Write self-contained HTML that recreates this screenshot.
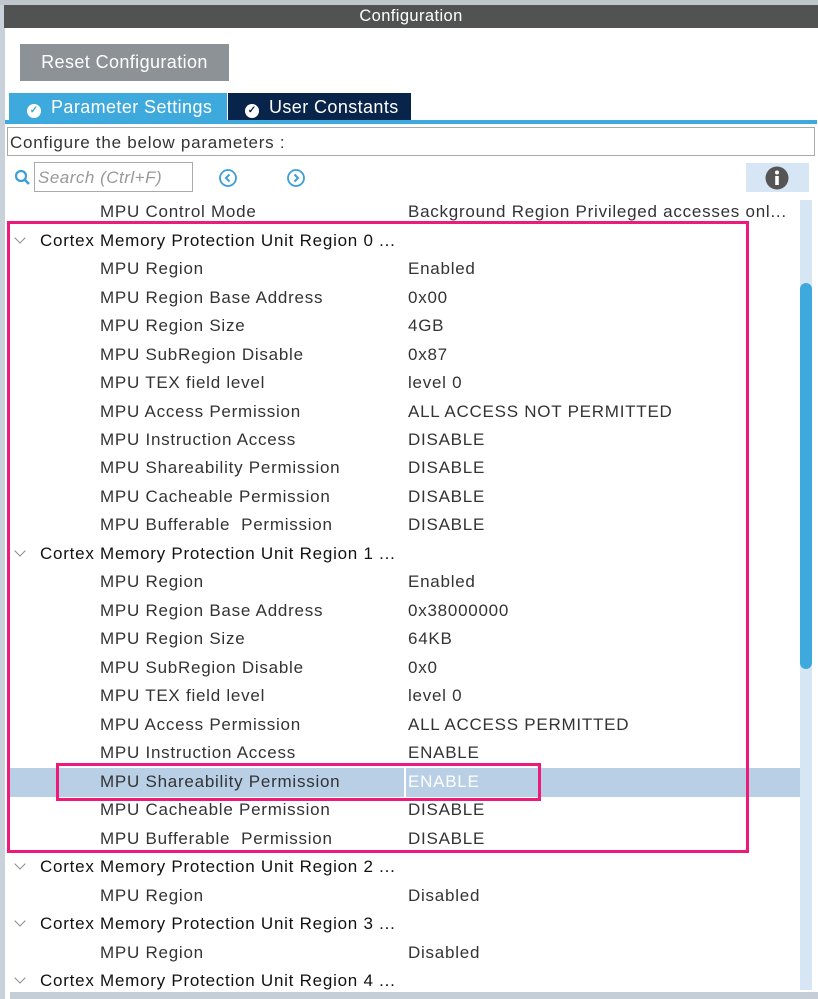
<!DOCTYPE html>
<html><head><style>
*{margin:0;padding:0;box-sizing:border-box}
body{width:818px;height:999px;overflow:hidden;background:#fff;font-family:"Liberation Sans",sans-serif;position:relative;color:#333}
.abs{position:absolute}
.row{position:absolute;left:0;height:28px;font-size:17px;line-height:28px;white-space:nowrap;letter-spacing:0.75px}
.n{position:absolute;left:100px}
.v{position:absolute;left:408px}
.h{position:absolute;left:40px;color:#111}
.chev{position:absolute;left:16px;top:7px;width:8px;height:8px;border-right:1.3px solid #888;border-bottom:1.3px solid #888;transform:rotate(45deg)}
</style></head><body>
<div class="abs" style="left:0;top:0;width:5px;height:999px;background:#c9d2da"></div>
<div class="abs" style="left:0;top:0;width:818px;height:5px;background:#bfc6cc"></div>
<div class="abs" style="left:4px;top:5px;width:814px;height:23px;background:#515352;color:#fff;font-size:16.5px;line-height:23px;text-align:center;letter-spacing:0.4px">Configuration</div>
<div class="abs" style="left:20px;top:44px;width:209px;height:37px;background:#8d9297;color:#fff;font-size:18px;line-height:37px;text-align:center;letter-spacing:0.4px">Reset Configuration</div>
<div class="abs" style="left:9px;top:93px;width:218px;height:28px;background:#3ea9dd;color:#fff;font-size:18px;line-height:28px;padding-left:18px;letter-spacing:0.4px"><span style="display:inline-block;width:14px;height:14px;border-radius:50%;background:#fff;color:#3ea9dd;font-size:10px;line-height:14px;text-align:center;vertical-align:0px;margin-right:10px;font-weight:bold;letter-spacing:0">✓</span>Parameter Settings</div>
<div class="abs" style="left:228px;top:93px;width:183px;height:28px;background:#08244a;color:#fff;font-size:18px;line-height:28px;padding-left:17px;letter-spacing:0.4px"><span style="display:inline-block;width:14px;height:14px;border-radius:50%;background:#fff;color:#08244a;font-size:10px;line-height:14px;text-align:center;vertical-align:0px;margin-right:10px;font-weight:bold;letter-spacing:0">✓</span>User Constants</div>
<div class="abs" style="left:5px;top:120px;width:812px;height:4px;background:#3ea9dd"></div>
<div class="abs" style="left:7px;top:127px;width:808px;height:29px;border:1px solid #aaa;font-size:17px;line-height:29px;padding-left:2px;letter-spacing:0.75px">Configure the below parameters :</div>
<svg class="abs" style="left:14px;top:169px" width="18" height="18"><circle cx="7" cy="7" r="5" fill="none" stroke="#3b9fd8" stroke-width="2.2"/><line x1="10.5" y1="10.5" x2="15" y2="15" stroke="#3b9fd8" stroke-width="2.5"/></svg>
<div class="abs" style="left:34px;top:162px;width:159px;height:30px;border:1px solid #aaa;font-size:17px;line-height:30px;padding-left:3px;color:#999;font-style:italic;letter-spacing:0.5px">Search (Ctrl+F)</div>
<svg class="abs" style="left:218px;top:168px" width="20" height="20"><circle cx="10" cy="10" r="8" fill="none" stroke="#3b9fd8" stroke-width="1.8"/><path d="M11.5 6.5 L8 10 L11.5 13.5" fill="none" stroke="#3b9fd8" stroke-width="2"/></svg>
<div class="abs" style="left:746px;top:163px;width:63px;height:29px;background:#d6e6f4"></div>
<svg class="abs" style="left:286px;top:168px" width="20" height="20"><circle cx="10" cy="10" r="8" fill="none" stroke="#3b9fd8" stroke-width="1.8"/><path d="M8.5 6.5 L12 10 L8.5 13.5" fill="none" stroke="#3b9fd8" stroke-width="2"/></svg>
<svg class="abs" style="left:765px;top:166px" width="24" height="24"><circle cx="12" cy="12" r="11.5" fill="#555"/><circle cx="12" cy="6.5" r="2" fill="#fff"/><rect x="10.2" y="10" width="3.6" height="9" fill="#fff"/></svg>
<div class="abs" style="left:800px;top:200px;width:12px;height:790px;background:#d6e6f4"></div>
<div class="abs" style="left:800px;top:283px;width:12px;height:386px;background:#3ea9dd;border-radius:6px"></div>
<div class="abs" style="left:10px;top:992px;width:808px;height:7px;background:#c5ced6"></div>
<div class="abs" style="left:10px;top:768px;width:790px;height:29px;background:#b8cfe6"></div>
<div class="abs" style="left:404px;top:768px;width:2px;height:29px;background:#fff"></div>

<div class="row" style="top:198px"><span class="n">MPU Control Mode</span><span class="v">Background Region Privileged accesses onl...</span></div>
<div class="row" style="top:227px"><i class="chev"></i><span class="h">Cortex Memory Protection Unit Region 0 ...</span></div>
<div class="row" style="top:255px"><span class="n">MPU Region</span><span class="v">Enabled</span></div>
<div class="row" style="top:284px"><span class="n">MPU Region Base Address</span><span class="v">0x00</span></div>
<div class="row" style="top:312px"><span class="n">MPU Region Size</span><span class="v">4GB</span></div>
<div class="row" style="top:341px"><span class="n">MPU SubRegion Disable</span><span class="v">0x87</span></div>
<div class="row" style="top:369px"><span class="n">MPU TEX field level</span><span class="v">level 0</span></div>
<div class="row" style="top:398px"><span class="n">MPU Access Permission</span><span class="v">ALL ACCESS NOT PERMITTED</span></div>
<div class="row" style="top:426px"><span class="n">MPU Instruction Access</span><span class="v">DISABLE</span></div>
<div class="row" style="top:454px"><span class="n">MPU Shareability Permission</span><span class="v">DISABLE</span></div>
<div class="row" style="top:483px"><span class="n">MPU Cacheable Permission</span><span class="v">DISABLE</span></div>
<div class="row" style="top:511px"><span class="n">MPU Bufferable &nbsp;Permission</span><span class="v">DISABLE</span></div>
<div class="row" style="top:540px"><i class="chev"></i><span class="h">Cortex Memory Protection Unit Region 1 ...</span></div>
<div class="row" style="top:568px"><span class="n">MPU Region</span><span class="v">Enabled</span></div>
<div class="row" style="top:597px"><span class="n">MPU Region Base Address</span><span class="v">0x38000000</span></div>
<div class="row" style="top:625px"><span class="n">MPU Region Size</span><span class="v">64KB</span></div>
<div class="row" style="top:654px"><span class="n">MPU SubRegion Disable</span><span class="v">0x0</span></div>
<div class="row" style="top:682px"><span class="n">MPU TEX field level</span><span class="v">level 0</span></div>
<div class="row" style="top:711px"><span class="n">MPU Access Permission</span><span class="v">ALL ACCESS PERMITTED</span></div>
<div class="row" style="top:739px"><span class="n">MPU Instruction Access</span><span class="v">ENABLE</span></div>
<div class="row" style="top:768px"><span class="n">MPU Shareability Permission</span><span class="v" style="color:#fff">ENABLE</span></div>
<div class="row" style="top:796px"><span class="n">MPU Cacheable Permission</span><span class="v">DISABLE</span></div>
<div class="row" style="top:825px"><span class="n">MPU Bufferable &nbsp;Permission</span><span class="v">DISABLE</span></div>
<div class="row" style="top:853px"><i class="chev"></i><span class="h">Cortex Memory Protection Unit Region 2 ...</span></div>
<div class="row" style="top:882px"><span class="n">MPU Region</span><span class="v">Disabled</span></div>
<div class="row" style="top:910px"><i class="chev"></i><span class="h">Cortex Memory Protection Unit Region 3 ...</span></div>
<div class="row" style="top:939px"><span class="n">MPU Region</span><span class="v">Disabled</span></div>
<div class="row" style="top:967px"><i class="chev"></i><span class="h">Cortex Memory Protection Unit Region 4 ...</span></div>

<div class="abs" style="left:7px;top:221px;width:742px;height:632px;border:3px solid #ee1a7a"></div>
<div class="abs" style="left:56px;top:763px;width:485px;height:38px;border:3px solid #ee1a7a"></div>
</body></html>
